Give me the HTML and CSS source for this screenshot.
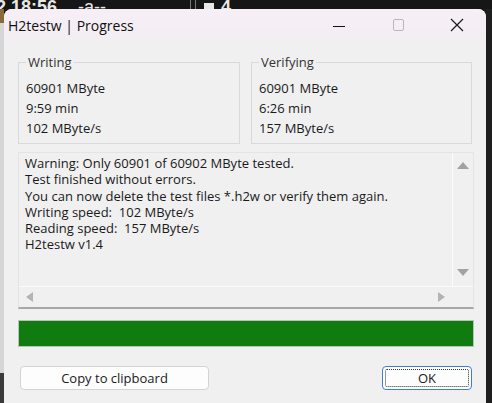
FILE: index.html
```html
<!DOCTYPE html>
<html>
<head>
<meta charset="utf-8">
<link rel="stylesheet" href="styles.css">
</head>
<body>
<div class="screen">
  <div class="topstrip">
    <span class="tb t1">2 18:56</span>
    <span class="tb t2">-a--</span>
    <span class="tb-sep"></span>
    <span class="tb-sq"></span>
    <span class="tb t3">4</span>
  </div>
  <div class="row">
    <div class="leftstrip">
      <div class="ls-a"></div>
      <div class="ls-b"></div>
      <div class="ls-c"></div>
    </div>
    <div class="window">
      <div class="titlebar">
        <span class="title">H2testw | Progress</span>
        <div class="caption">
          <div class="cap-btn cap-min"><div class="min-bar"></div></div>
          <div class="cap-btn"><svg width="12" height="12" viewBox="0 0 12 12"><rect x="1.5" y="0.5" width="10" height="11" rx="1.5" fill="none" stroke="#b9b6bb" stroke-width="1"/></svg></div>
          <div class="cap-btn"><svg width="14" height="14" viewBox="0 0 14 14"><path d="M1 1 L13 13 M13 1 L1 13" stroke="#1a1a1a" stroke-width="1.2"/></svg></div>
        </div>
      </div>
      <div class="content">
        <div class="groups">
          <div class="group g1">
            <div class="legend">Writing</div>
            <div class="line">60901 MByte</div>
            <div class="line">9:59 min</div>
            <div class="line">102 MByte/s</div>
          </div>
          <div class="group g2">
            <div class="legend">Verifying</div>
            <div class="line">60901 MByte</div>
            <div class="line">6:26 min</div>
            <div class="line">157 MByte/s</div>
          </div>
        </div>
        <div class="log">
          <div class="log-main">
            <div class="log-text">
              <div>Warning: Only 60901 of 60902 MByte tested.</div>
              <div>Test finished without errors.</div>
              <div>You can now delete the test files *.h2w or verify them again.</div>
              <div>Writing speed:&nbsp; 102 MByte/s</div>
              <div>Reading speed:&nbsp; 157 MByte/s</div>
              <div>H2testw v1.4</div>
            </div>
            <div class="vscroll">
              <span class="arr arr-up"></span>
              <span class="arr arr-down"></span>
            </div>
          </div>
          <div class="hscroll">
            <span class="arr arr-left"></span>
            <span class="arr arr-right"></span>
          </div>
        </div>
        <div class="progress"><div class="fill" style="width:100%"></div></div>
        <div class="buttons">
          <button class="btn copy">Copy to clipboard</button>
          <button class="btn ok"><span class="focus">OK</span></button>
        </div>
      </div>
    </div>
    <div class="rightgap"></div>
  </div>
</div>
</body>
</html>
```
FILE: styles.css
```css
html, body {
  margin: 0;
  padding: 0;
  background: #1b1b1b;
  overflow: hidden;
}
.screen {
  width: 492px;
  height: 403px;
  display: flex;
  flex-direction: column;
  font-family: "Open Sans", "Noto Sans", sans-serif;
}
.topstrip {
  height: 9px;
  background: #161616;
  overflow: hidden;
  display: flex;
  align-items: flex-end;
  color: #e8e8e8;
  font-family: "Liberation Sans", sans-serif;
  font-weight: bold;
  font-size: 18px;
  line-height: 14px;
}
.tb {
  display: block;
  margin-bottom: -5px;
  white-space: nowrap;
}
.t1 { margin-left: -4px; width: 82px; }
.t2 { width: 112px; font-weight: normal; }
.tb-sep {
  width: 4px;
  height: 9px;
  border-left: 1px solid #777;
  border-right: 1px solid #777;
  margin-right: 8px;
}
.tb-sq {
  width: 10px;
  height: 6px;
  background: #e8e8e8;
  margin-right: 7px;
}
.t3 { width: 20px; }
.row {
  flex: 1;
  display: flex;
}
.leftstrip {
  width: 4px;
  background: #cfcfcf;
  display: flex;
  flex-direction: column;
}
.ls-a { height: 14px; background: #8a6a3a; }
.ls-b { flex: 1; background: #d6d6d6; }
.ls-c { height: 30px; background: #3a3a3a; }
.rightgap {
  width: 6px;
  background: #1e1e1e;
}
.window {
  width: 482px;
  background: #f0f0f0;
  border-radius: 8px 8px 0 0;
  display: flex;
  flex-direction: column;
  overflow: hidden;
}
.titlebar {
  height: 34px;
  flex-shrink: 0;
  background: linear-gradient(#f6eff6, #f3eef2);
  display: flex;
  align-items: center;
}
.title {
  flex: 1;
  padding-left: 4px;
  font-size: 14px;
  color: #111;
  margin-top: -2px;
}
.caption {
  flex: none;
  display: flex;
  align-items: center;
  margin-top: -3px;
}
.cap-btn {
  flex: none;
  display: flex;
  justify-content: center;
  align-items: center;
  width: 59px;
  height: 20px;
}
.min-bar {
  width: 12px;
  height: 1px;
  background: #111;
  margin-top: 3px;
}
.content {
  padding: 19px 0 0 14px;
  font-size: 13px;
  color: #1a1a1a;
}
.groups {
  display: flex;
  gap: 11px;
}
.group {
  box-sizing: border-box;
  height: 82px;
  border: 1px solid #d9d9d9;
  padding-left: 7px;
}
.g1 { width: 222px; }
.g2 { width: 221px; }
.legend {
  width: fit-content;
  margin: -10px 0 0 0;
  padding: 0 2px;
  background: #f0f0f0;
  line-height: 18px;
  color: #333;
}
.line {
  line-height: 20px;
}
.legend + .line { margin-top: 7px; }
.log {
  box-sizing: border-box;
  margin-top: 8px;
  width: 456px;
  height: 157px;
  border: 1px solid #e4e4e4;
  border-bottom: 2px solid #a8a8a8;
  display: flex;
  flex-direction: column;
  background: #f0f0f0;
}
.log-main {
  flex: 1;
  display: flex;
  border-bottom: 1px solid #fbfbfb;
}
.log-text {
  flex: 1;
  padding: 2px 0 0 6px;
  line-height: 16.3px;
  border-right: 1px solid #fbfbfb;
  white-space: nowrap;
  overflow: hidden;
}
.vscroll {
  width: 20px;
  display: flex;
  flex-direction: column;
  justify-content: space-between;
  align-items: center;
  padding: 9px 0 10px;
}
.hscroll {
  height: 20px;
  display: flex;
  justify-content: space-between;
  align-items: center;
  padding: 0 28px 0 7px;
}
.arr {
  width: 0;
  height: 0;
  border: 5px solid transparent;
}
.arr-up { border-bottom: 7px solid #a2a2a2; border-top: 0; border-left-width: 6px; border-right-width: 6px; }
.arr-down { border-top: 7px solid #a2a2a2; border-bottom: 0; border-left-width: 6px; border-right-width: 6px; }
.arr-left { border-right: 7px solid #b4b4b4; border-left: 0; }
.arr-right { border-left: 7px solid #b4b4b4; border-right: 0; }
.progress {
  box-sizing: border-box;
  margin-top: 11px;
  width: 456px;
  height: 27px;
  border: 1px solid #b8c4b8;
  background: #e6e6e6;
}
.fill {
  height: 100%;
  background: #107c10;
}
.buttons {
  margin-top: 19px;
  display: flex;
  justify-content: space-between;
  width: 452px;
  padding-left: 2px;
}
.btn {
  box-sizing: border-box;
  height: 24px;
  background: #fdfdfd;
  border: 1px solid #d3d3d3;
  border-radius: 4px;
  font-family: inherit;
  font-size: 13px;
  color: #1a1a1a;
  padding: 0;
}
.copy { width: 189px; }
.ok {
  width: 90px;
  border: 1.5px solid #3f7fd0;
  padding: 2px;
  display: flex;
}
.focus {
  flex: 1;
  border: 1px dotted #333;
  border-radius: 2px;
  display: flex;
  align-items: center;
  justify-content: center;
}
```
